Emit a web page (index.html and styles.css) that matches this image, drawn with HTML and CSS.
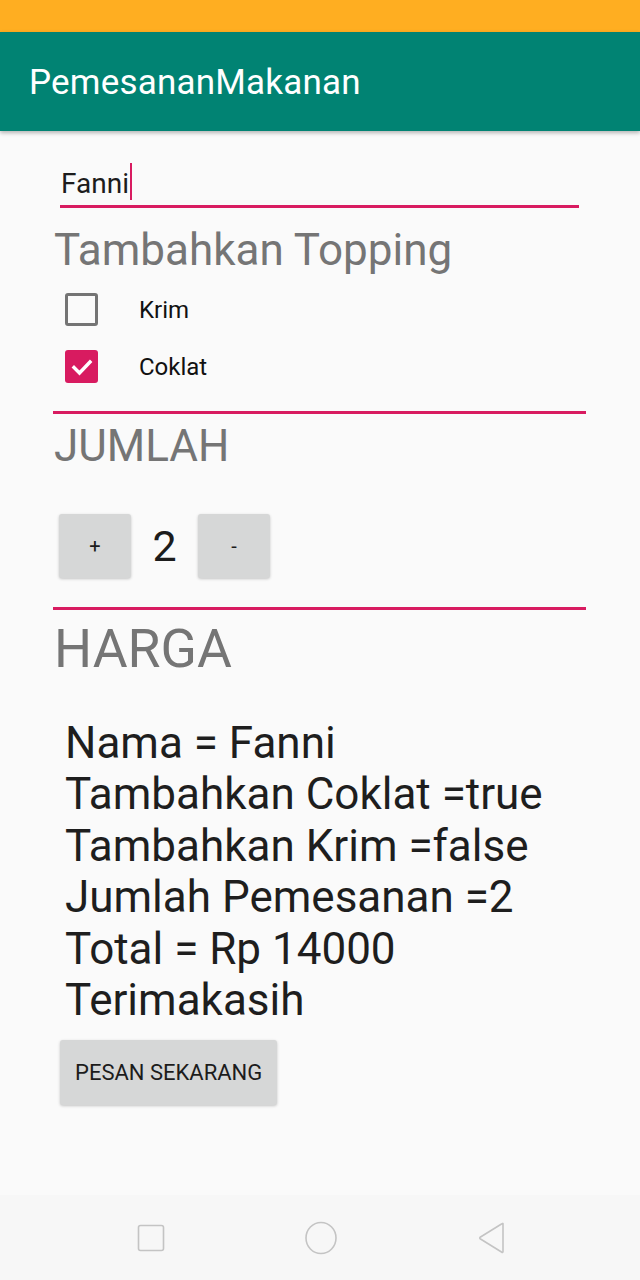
FILE: index.html
```html
<!DOCTYPE html>
<html>
<head>
<meta charset="utf-8">
<link rel="stylesheet" href="styles.css">
</head>
<body>
<div class="screen">
  <div class="status"></div>
  <header class="appbar"><span class="title">PemesananMakanan</span></header>
  <main class="content">
    <div class="input"><span class="input-text">Fanni</span><span class="cursor"></span></div>
    <div class="heading topping">Tambahkan Topping</div>
    <div class="check-row first">
      <span class="box"></span><span class="check-label">Krim</span>
    </div>
    <div class="check-row">
      <span class="box checked"><svg viewBox="0 0 32 32" width="32" height="32"><polyline points="8,16.5 13.5,22 24,11" fill="none" stroke="#fff" stroke-width="3.4" stroke-linecap="square"/></svg></span><span class="check-label">Coklat</span>
    </div>
    <div class="divider d1"></div>
    <div class="heading jumlah">JUMLAH</div>
    <div class="qty-row">
      <div class="btn small">+</div>
      <div class="qty">2</div>
      <div class="btn small">-</div>
    </div>
    <div class="divider d2"></div>
    <div class="heading harga">HARGA</div>
    <div class="summary">
      <div>Nama = Fanni</div>
      <div>Tambahkan Coklat =true</div>
      <div>Tambahkan Krim =false</div>
      <div>Jumlah Pemesanan =2</div>
      <div>Total = Rp 14000</div>
      <div>Terimakasih</div>
    </div>
    <div class="btn order">PESAN SEKARANG</div>
  </main>
  <nav class="navbar">
    <svg class="nav-icon" width="28" height="28" viewBox="0 0 28 28"><rect x="1.5" y="1.5" width="25" height="25" rx="2" fill="none" stroke="#c4c4c4" stroke-width="1.6"/></svg>
    <svg class="nav-icon" width="34" height="34" viewBox="0 0 34 34"><ellipse cx="17" cy="17" rx="15" ry="15.5" fill="none" stroke="#c4c4c4" stroke-width="1.6"/></svg>
    <svg class="nav-icon" width="30" height="34" viewBox="0 0 30 34"><path d="M26 2.5 L26 30.5 Q26 32 24.5 31 L3.5 18 Q2 17 3.5 16 L24.5 3 Q26 2 26 3.5 Z" fill="none" stroke="#c4c4c4" stroke-width="1.6" stroke-linejoin="round"/></svg>
  </nav>
</div>
</body>
</html>
```

FILE: styles.css
```css
html, body {
  margin: 0;
  padding: 0;
}
body {
  background: #fafafa;
  font-family: Roboto, "Noto Sans", sans-serif;
}
.screen {
  width: 640px;
  height: 1280px;
  display: flex;
  flex-direction: column;
  background: #fafafa;
  overflow: hidden;
}
.status {
  height: 32px;
  background: #ffae21;
  flex: none;
}
.appbar {
  height: 99px;
  flex: none;
  background: #018373;
  display: flex;
  align-items: center;
  padding-left: 29px;
  box-shadow: 0 2px 4px rgba(0,0,0,0.28);
  position: relative;
  z-index: 1;
}
.title {
  color: #ffffff;
  font-size: 35px;
  letter-spacing: 0.2px;
  margin-top: 2px;
}
.content {
  flex: 1;
  display: flex;
  flex-direction: column;
  padding: 0 54px 0 53px;
}
.input {
  margin: 31px 7px 0 7px;
  height: 43px;
  border-bottom: 3px solid #d81b60;
  display: flex;
  align-items: flex-start;
}
.input-text {
  font-size: 28px;
  color: #1c1c1c;
  line-height: 43px;
  margin-left: 1px;
}
.cursor {
  width: 2px;
  height: 37px;
  background: #d81b60;
  margin-top: 1px;
  margin-left: 1px;
}
.heading {
  color: #757575;
  line-height: 1;
}
.topping {
  font-size: 44px;
  margin: 20px 0 0 1px;
}
.check-row {
  display: flex;
  align-items: center;
  height: 57px;
  margin-left: 12px;
}
.check-row.first {
  margin-top: 9px;
}
.box {
  width: 33px;
  height: 33px;
  box-sizing: border-box;
  border: 3px solid #747474;
  border-radius: 3px;
  display: flex;
  align-items: center;
  justify-content: center;
}
.box.checked {
  border: none;
  background: #d81b60;
}
.check-label {
  font-size: 24px;
  color: #111;
  margin-left: 41px;
}
.divider {
  height: 3px;
  background: #d81b60;
}
.d1 {
  margin-top: 16px;
}
.jumlah {
  font-size: 44px;
  margin: 10px 0 0 1px;
}
.qty-row {
  display: flex;
  align-items: center;
  margin: 46px 0 0 6px;
}
.btn {
  background: #d6d7d7;
  border-radius: 3px;
  box-shadow: 0 1px 3px rgba(0,0,0,0.22);
  color: #1c1c1c;
  display: flex;
  align-items: center;
  justify-content: center;
}
.btn.small {
  width: 72px;
  height: 64px;
  font-size: 20px;
}
.qty {
  font-size: 43px;
  color: #1c1c1c;
  width: 67px;
  text-align: center;
}
.d2 {
  margin-top: 29px;
}
.harga {
  font-size: 53.5px;
  margin: 12px 0 0 1px;
}
.summary {
  margin: 42px 0 0 12px;
  font-size: 44px;
  line-height: 51.5px;
  color: #1e1e1e;
}
.btn.order {
  width: 217px;
  height: 65px;
  margin: 13px 0 0 7px;
  font-size: 22px;
  justify-content: flex-start;
  padding-left: 15px;
  box-sizing: border-box;
}
.navbar {
  height: 85px;
  flex: none;
  background: #f7f7f7;
  display: flex;
  align-items: center;
  justify-content: space-between;
  padding: 0 133px 0 137px;
}
```
